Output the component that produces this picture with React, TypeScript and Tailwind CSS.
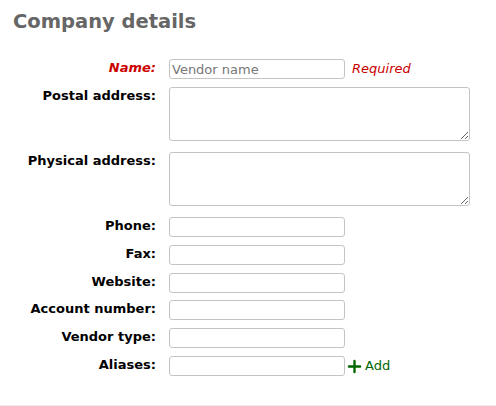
import { Plus } from 'lucide-react';

const shortFields = ['Phone', 'Fax', 'Website', 'Account number', 'Vendor type'];

const font = { fontFamily: '"DejaVu Sans", sans-serif' };

function Label({ children, required }: { children: React.ReactNode; required?: boolean }) {
  return (
    <div
      className={`w-[143px] shrink-0 text-right text-[13px] font-bold leading-[15px] pt-[1px] ${
        required ? 'text-[#cc0000] italic' : 'text-black'
      }`}
    >
      {children}
    </div>
  );
}

export default function App() {
  return (
    <div style={font} className="w-[496px] h-[406px] bg-white border-b border-[#eeeeee] px-[13px] pt-[10px]">
      <h2 className="text-[19.5px] font-bold text-[#666666] leading-[24px] mb-[25px]">Company details</h2>

      <div className="flex flex-col gap-[8px]">
        <div className="flex items-start gap-[13px]">
          <Label required>Name:</Label>
          <input
            placeholder="Vendor name"
            className="w-[176px] h-[20px] border border-[#c4c4c4] rounded-[3px] px-[2px] text-[13px] placeholder:text-[#777777] outline-none"
          />
          <span className="text-[13px] italic text-[#cc0000] leading-[20px] -ml-[6px]">Required</span>
        </div>

        {['Postal address', 'Physical address'].map((label) => (
          <div key={label} className="flex items-start gap-[13px] mb-[3px]">
            <Label>{label}:</Label>
            <textarea className="block w-[301px] h-[54px] border border-[#c4c4c4] rounded-[3px] text-[13px] outline-none" />
          </div>
        ))}

        {shortFields.map((label, i) => (
          <div key={label} className={`flex items-start gap-[13px] ${i === 2 ? '-mb-[1px]' : ''}`}>
            <Label>{label}:</Label>
            <input className="w-[176px] h-[20px] border border-[#c4c4c4] rounded-[3px] px-[2px] text-[13px] outline-none" />
          </div>
        ))}

        <div className="flex items-start gap-[13px]">
          <Label>Aliases:</Label>
          <input className="w-[176px] h-[20px] border border-[#c4c4c4] rounded-[3px] px-[2px] text-[13px] outline-none" />
          <button className="flex items-center gap-[1px] -ml-[13px] h-[20px] text-[13px] text-[#006600]">
            <Plus size={19} strokeWidth={3} />
            Add
          </button>
        </div>
      </div>
    </div>
  );
}
